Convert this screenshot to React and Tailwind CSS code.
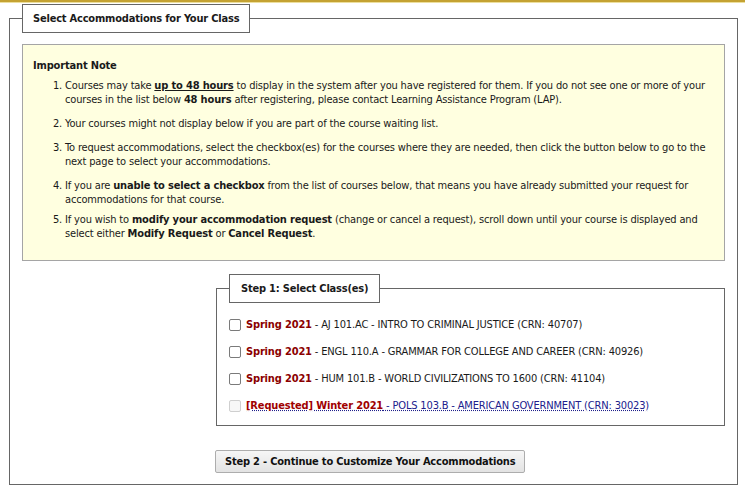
import React from 'react'

const FONT = { fontFamily: '"DejaVu Sans Condensed", "DejaVu Sans", Tahoma, sans-serif' }

const courses = [
  { term: 'Spring 2021', text: 'AJ 101.AC - INTRO TO CRIMINAL JUSTICE (CRN: 40707)' },
  { term: 'Spring 2021', text: 'ENGL 110.A - GRAMMAR FOR COLLEGE AND CAREER (CRN: 40926)' },
  { term: 'Spring 2021', text: 'HUM 101.B - WORLD CIVILIZATIONS TO 1600 (CRN: 41104)' },
]

export default function App() {
  return (
    <div className="w-[745px] h-[493px] bg-white text-[11px] leading-[14px] tracking-[-0.16px] text-[#1a1a1a] overflow-hidden" style={FONT}>
      {/* gold strip along the top */}
      <div className="h-[3px] bg-[#c4a232] border-b border-[#ecdf9e]" />

      <fieldset className="ml-[9px] mt-[1px] w-[729px] border border-[#666] px-[12px] pb-[11px]">
        <legend className="border border-[#666] bg-white px-[10px] py-[7px] font-bold leading-[13px] tracking-[-0.2px]">
          Select Accommodations for Your Class
        </legend>

        {/* Important note */}
        <div className="mt-[11px] bg-[#ffffe0] border border-[#a5a5a5] pl-[10px] pr-[10px] pt-[14px] pb-[19px]">
          <p className="font-bold">Important Note</p>
          <ol className="list-decimal pl-[32px] mt-[6px]">
            <li>
              Courses may take <b className="underline">up to 48 hours</b> to display in the system after you have
              registered for them. If you do not see one or more of your courses in the list below <b>48 hours</b> after
              registering, please contact Learning Assistance Program (LAP).
            </li>
            <li className="mt-[10px]">Your courses might not display below if you are part of the course waiting list.</li>
            <li className="mt-[10px]">
              To request accommodations, select the checkbox(es) for the courses where they are needed, then click the
              button below to go to the next page to select your accommodations.
            </li>
            <li className="mt-[10px]">
              If you are <b>unable to select a checkbox</b> from the list of courses below, that means you have already
              submitted your request for accommodations for that course.
            </li>
            <li className="mt-[6px]">
              If you wish to <b>modify your accommodation request</b> (change or cancel a request), scroll down until your
              course is displayed and select either <b>Modify Request</b> or <b>Cancel Request</b>.
            </li>
          </ol>
        </div>

        <div className="flex justify-end mt-[13px]">
          <div className="w-[510px]">
            <fieldset className="border border-[#666] px-[12px] pb-[12px] w-[509px] ml-[1px]">
              <legend className="border border-[#666] bg-white px-[11px] py-[7px] font-bold leading-[13px] tracking-[-0.2px]">
                Step 1: Select Class(es)
              </legend>
              <div className="mt-[15px] flex flex-col gap-[13px]">
                {courses.map((c, i) => (
                  <label key={i} className="flex items-center">
                    <input
                      type="checkbox"
                      className="appearance-none m-0 mr-[5px] w-[12px] h-[12px] border border-[#7a7a7a] rounded-[2px] bg-white"
                    />
                    <span>
                      <b className="text-[#8b0000]">{c.term}</b> - {c.text}
                    </span>
                  </label>
                ))}
                <label className="flex items-center">
                  <input
                    type="checkbox"
                    disabled
                    className="appearance-none m-0 mr-[5px] w-[12px] h-[12px] border border-[#cfcfcf] rounded-[2px] bg-[#f7f7f7]"
                  />
                  <a href="#" className="underline decoration-dotted decoration-[#1f1f8a] text-[#20208c]">
                    <b className="text-[#a00000]">[Requested] Winter 2021</b> - POLS 103.B - AMERICAN GOVERNMENT (CRN: 30023)
                  </a>
                </label>
              </div>
            </fieldset>

            <button className="mt-[24px] h-[23px] px-[9px] border border-[#adadad] rounded-[2px] bg-gradient-to-b from-[#f6f6f6] to-[#e3e3e3] font-bold text-[11px] tracking-[-0.2px] text-[#111]">
              Step 2 - Continue to Customize Your Accommodations
            </button>
          </div>
        </div>
      </fieldset>
    </div>
  )
}
